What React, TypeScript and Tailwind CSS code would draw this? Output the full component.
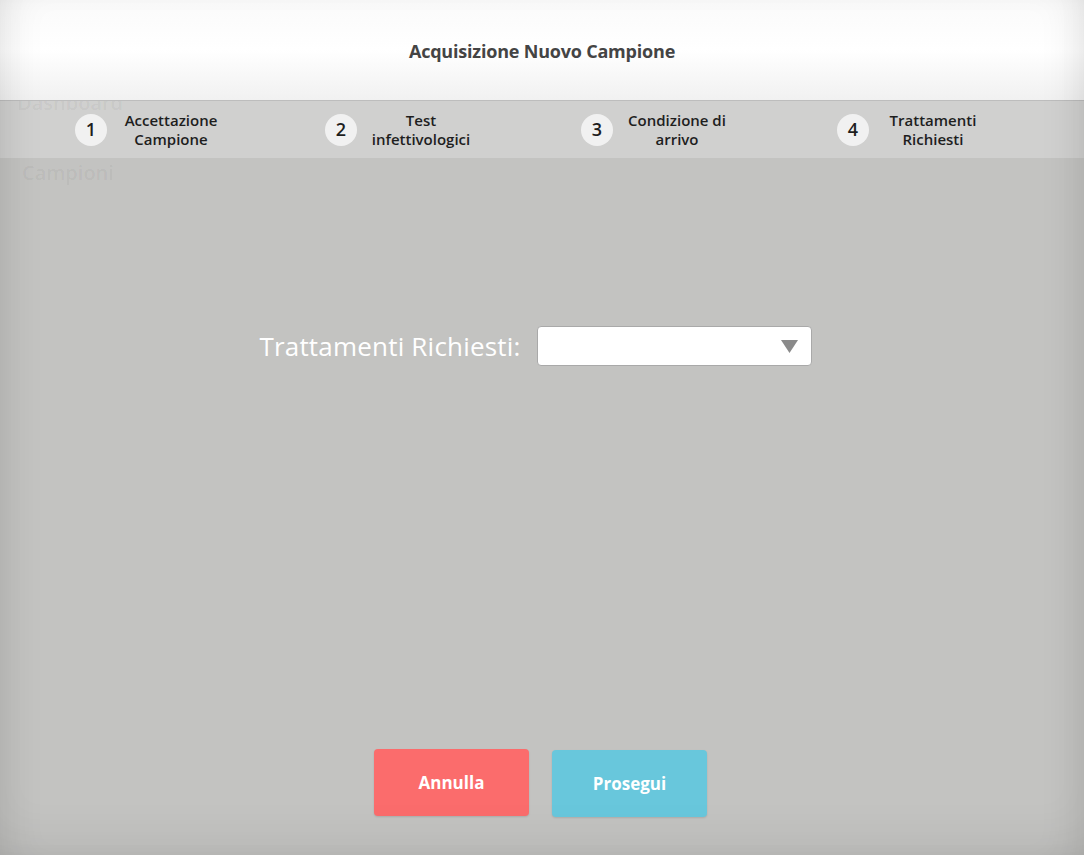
import React from 'react';

const steps = [
  { n: 1, label: ['Accettazione', 'Campione'], ml: 'ml-[75px]' },
  { n: 2, label: ['Test', 'infettivologici'], ml: 'ml-[90px]' },
  { n: 3, label: ['Condizione di', 'arrivo'], ml: 'ml-[96px]' },
  { n: 4, label: ['Trattamenti', 'Richiesti'], ml: 'ml-[96px]' },
];

export default function App() {
  return (
    <div
      className="relative w-full h-[855px] overflow-hidden bg-[#c3c3c1] flex flex-col"
      style={{ fontFamily: '"Open Sans", "Noto Sans", sans-serif' }}
    >
      {/* Header */}
      <header className="relative z-10 h-[101px] shrink-0 bg-gradient-to-b from-[#fafafa] via-white to-[#f1f1f1] border-b border-[#bdbdbd] flex items-center justify-center pt-[3px]">
        <h1 className="text-[18px] font-bold text-[#444] tracking-[-0.2px]">Acquisizione Nuovo Campione</h1>
      </header>

      {/* Steps */}
      <div className="h-[57px] shrink-0 bg-[#d0d0cf] flex items-center">
        {steps.map((s) => (
          <div key={s.n} className={`flex items-center ${s.ml}`}>
            <div className="w-[32px] h-[32px] rounded-full bg-[#f1f1f1] flex items-center justify-center text-[18px] font-semibold text-[#1e1e1e]">
              {s.n}
            </div>
            <div className="w-[128px] text-center text-[15px] leading-[19px] font-semibold text-[#1e1e1e]">
              <div>{s.label[0]}</div>
              <div>{s.label[1]}</div>
            </div>
          </div>
        ))}
      </div>

      {/* Page behind the modal, barely visible */}
      <div className="absolute left-[17px] top-[88px] text-[20px] font-semibold text-black/[0.05]">Dashboard</div>
      <div className="absolute left-[22px] top-[158px] text-[20px] font-semibold text-black/[0.05]">Campioni</div>

      {/* Body */}
      <main className="relative flex-1 flex flex-col">
        <div className="pt-[168px] flex items-center justify-center gap-[16px] pr-[13px]">
          <label className="text-[26px] text-white tracking-[0.2px]">Trattamenti Richiesti:</label>
          <div className="w-[275px] h-[40px] bg-white rounded-[4px] border border-[#a9a9a9] flex items-center justify-end pr-[13px]">
            <svg width="17" height="13" viewBox="0 0 17 13">
              <path d="M0 0 H17 L8.5 13 Z" fill="#8a8a8a" />
            </svg>
          </div>
        </div>

        <div className="flex-1" />

        <div className="flex items-start justify-center gap-[23px] pb-[38px] pr-[3px]">
          <button className="w-[155px] h-[67px] rounded-[4px] bg-[#fb6c6c] text-white text-[17px] font-bold shadow-[0_1px_2px_rgba(0,0,0,0.12)]">
            Annulla
          </button>
          <button className="mt-[1px] w-[155px] h-[67px] rounded-[4px] bg-[#68c7dc] text-white text-[17px] font-bold shadow-[0_1px_2px_rgba(0,0,0,0.12)]">
            Prosegui
          </button>
        </div>
      </main>

      {/* Vignette over everything */}
      <div className="pointer-events-none absolute inset-0 z-20 shadow-[inset_0_-30px_50px_-20px_rgba(0,0,0,0.08),inset_30px_0_40px_-25px_rgba(0,0,0,0.1),inset_-30px_0_40px_-25px_rgba(0,0,0,0.1)]" />
    </div>
  );
}
